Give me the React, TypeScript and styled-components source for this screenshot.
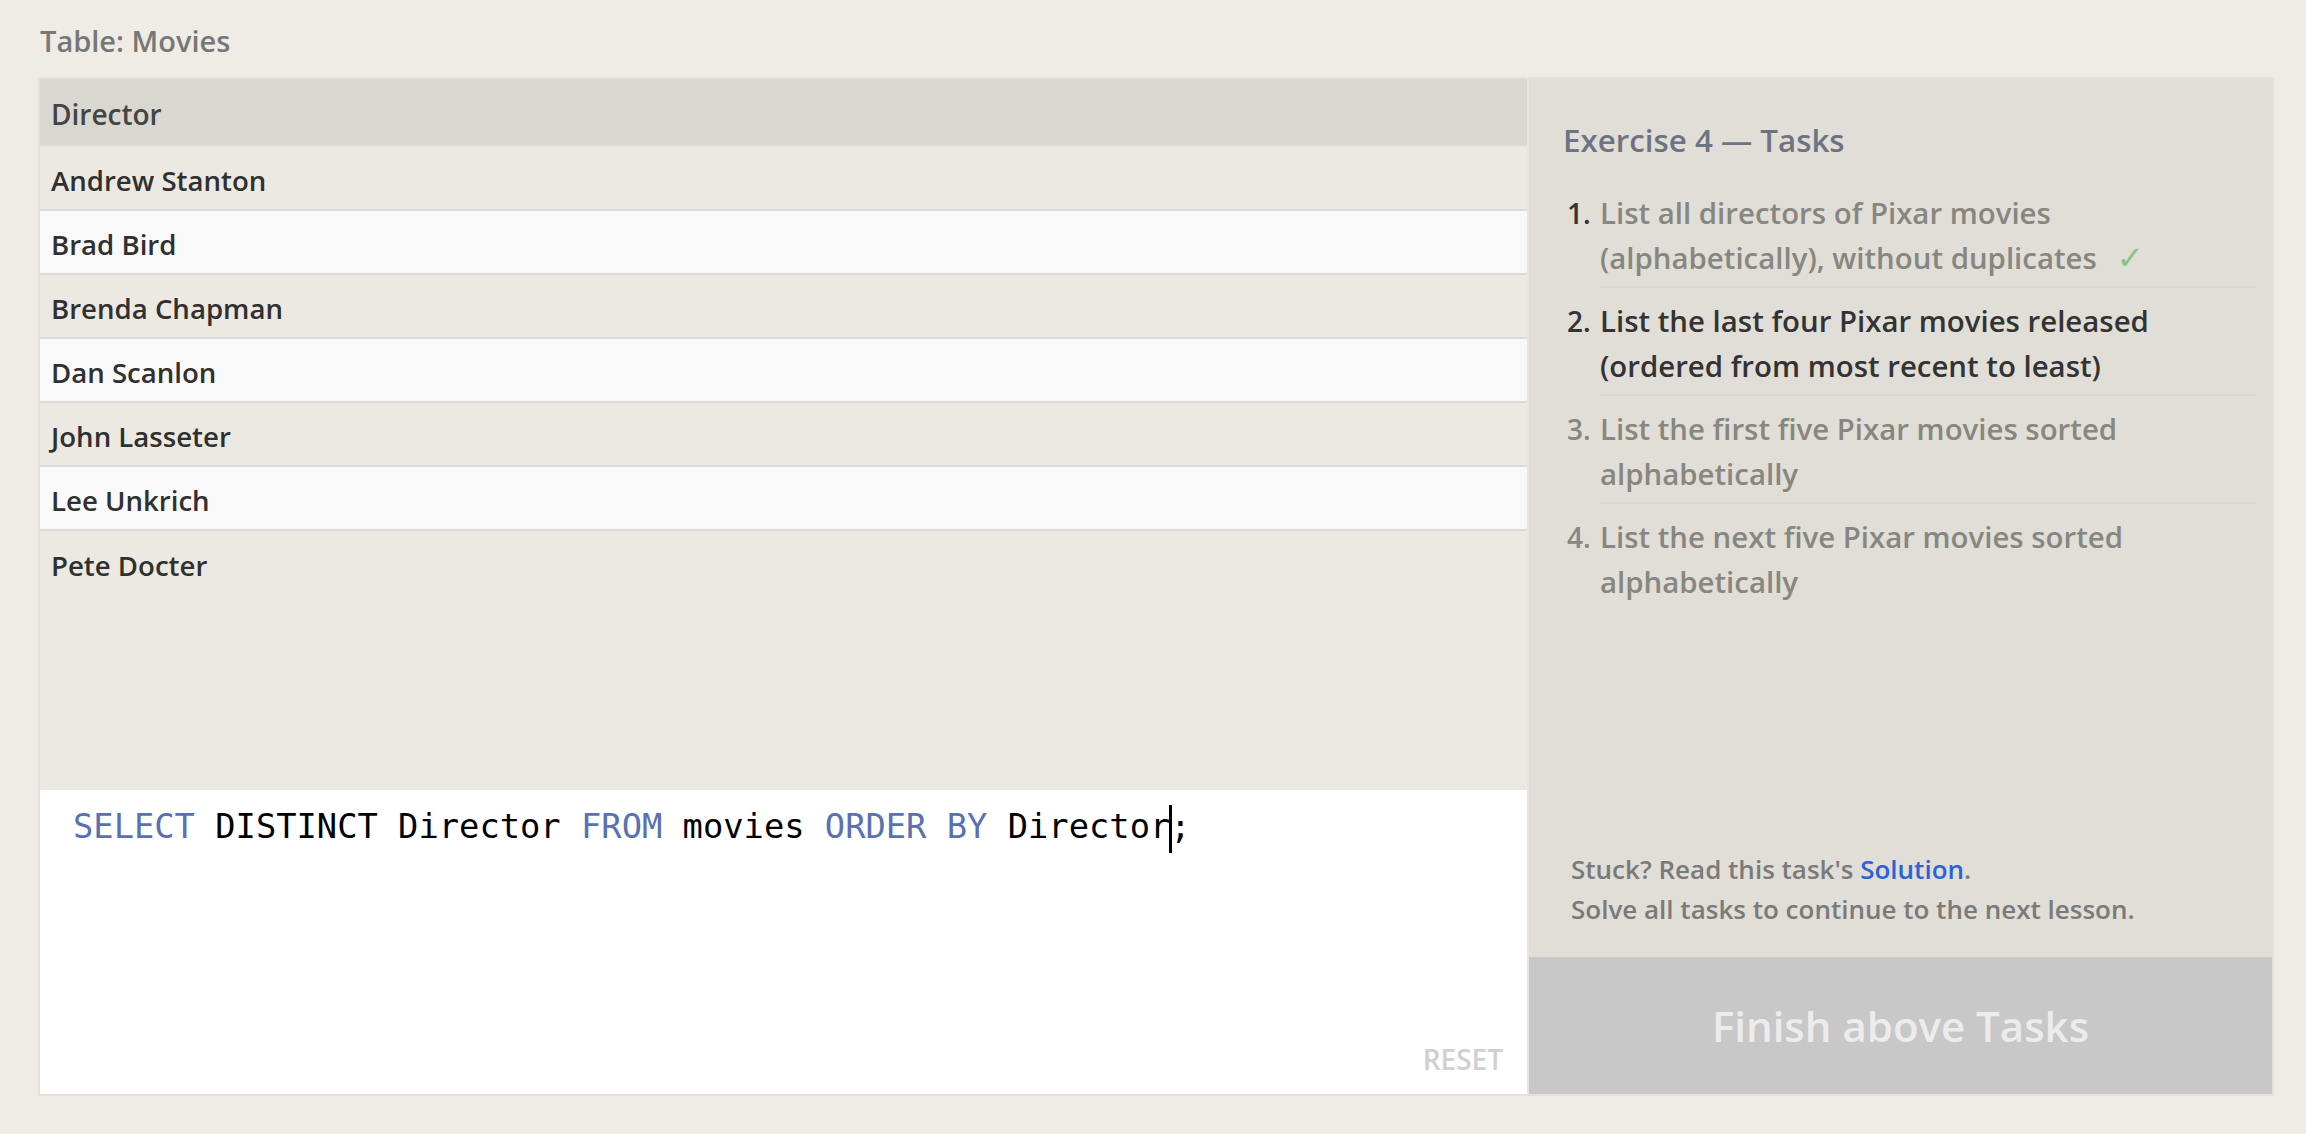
import React from 'react';
import styled, {createGlobalStyle} from 'styled-components';

const GlobalStyle = createGlobalStyle`
  html, body {
    margin: 0;
    padding: 0;
    background: #efece6;
  }
  body {
    font-family: "Open Sans", "Noto Sans", sans-serif;
  }
`;

type Task = {
  text: React.ReactNode,
  state: 'done' | 'current' | 'todo',
};

const directors = [
  'Andrew Stanton',
  'Brad Bird',
  'Brenda Chapman',
  'Dan Scanlon',
  'John Lasseter',
  'Lee Unkrich',
  'Pete Docter',
];

const tasks: Task[] = [
  {text: 'List all directors of Pixar movies (alphabetically), without duplicates', state: 'done'},
  {text: 'List the last four Pixar movies released (ordered from most recent to least)', state: 'current'},
  {text: 'List the first five Pixar movies sorted alphabetically', state: 'todo'},
  {text: 'List the next five Pixar movies sorted alphabetically', state: 'todo'},
];

const App = () => {
  return (
    <>
      <GlobalStyle/>
      <Page>
        <Title>Table: Movies</Title>
        <Panel>
          <LeftColumn>
            <ResultTable>
              <HeaderCell>Director</HeaderCell>
              {directors.map((name, i) => (
                <Row key={name} even={i % 2 === 1}>{name}</Row>
              ))}
            </ResultTable>
            <Editor>
              <Code>
                <Keyword>SELECT</Keyword> DISTINCT Director <Keyword>FROM</Keyword> movies <Keyword>ORDER BY</Keyword> Director<Cursor/>;
              </Code>
              <EditorFooter>
                <ResetButton>RESET</ResetButton>
              </EditorFooter>
            </Editor>
          </LeftColumn>
          <RightColumn>
            <TasksBox>
              <TasksHeading>Exercise 4 — Tasks</TasksHeading>
              <TaskList>
                {tasks.map((task, i) => (
                  <TaskItem key={i}>
                    <TaskNumber state={task.state}>{i + 1}.</TaskNumber>
                    <TaskText state={task.state}>
                      {task.text}
                      {task.state === 'done' && <Check>✓</Check>}
                    </TaskText>
                  </TaskItem>
                ))}
              </TaskList>
              <Hint>
                <div>Stuck? Read this task's <SolutionLink>Solution</SolutionLink>.</div>
                <div>Solve all tasks to continue to the next lesson.</div>
              </Hint>
            </TasksBox>
            <FinishButton>Finish above Tasks</FinishButton>
          </RightColumn>
        </Panel>
      </Page>
    </>
  );
}

const Page = styled.div`
  padding: 21px 32px 36px 38px;
`

const Title = styled.div`
  font-size: 29px;
  font-weight: 600;
  color: #777;
  margin-left: 2px;
  margin-bottom: 17px;
`

const Panel = styled.div`
  display: flex;
  border: 2px solid #e3e2da;
  height: 1015px;
`

const LeftColumn = styled.div`
  display: flex;
  flex-direction: column;
  width: 1487px;
  border-right: 2px solid #e7e6df;
`

const ResultTable = styled.div`
  flex: 1;
  background: #ebe9e2;
`

const HeaderCell = styled.div`
  height: 68px;
  display: flex;
  align-items: center;
  padding: 4px 0 0 11px;
  box-sizing: border-box;
  background: #d9d8d0;
  border-bottom: 2px solid #e3e2dc;
  font-size: 28px;
  font-weight: 600;
  color: #444;
`

const Row = styled.div<{even?: boolean}>`
  height: 64px;
  display: flex;
  align-items: center;
  padding: 3px 0 0 11px;
  box-sizing: border-box;
  background: ${p => p.even ? '#f9f9f9' : '#ebe9e2'};
  border-bottom: 2px solid #dcdcdc;
  font-size: 27.6px;
  font-weight: 600;
  color: #303030;
  &:last-child {
    border-bottom: none;
  }
`

const Editor = styled.div`
  height: 304px;
  display: flex;
  flex-direction: column;
  background: #fff;
  padding: 17px 24px 16px 33px;
  box-sizing: border-box;
`

const Code = styled.div`
  flex: 1;
  font-family: "DejaVu Sans Mono", "Liberation Mono", monospace;
  font-size: 33.75px;
  line-height: 40px;
  color: #000;
  white-space: pre;
`

const Keyword = styled.span`
  color: #5a70b2;
`

const Cursor = styled.span`
  position: relative;
  &::after {
    content: '';
    position: absolute;
    left: -1px;
    top: -2px;
    width: 3px;
    height: 48px;
    background: #000;
  }
`

const EditorFooter = styled.div`
  display: flex;
  justify-content: flex-end;
`

const ResetButton = styled.div`
  font-size: 28px;
  font-weight: 600;
  color: #d0d0d0;
`

const RightColumn = styled.div`
  flex: 1;
  display: flex;
  flex-direction: column;
  background: #e0ded6;
`

const TasksBox = styled.div`
  flex: 1;
  display: flex;
  flex-direction: column;
  padding: 40px 16px 28px 34px;
`

const TasksHeading = styled.div`
  font-size: 31.3px;
  font-weight: 600;
  color: #6d7383;
`

const TaskList = styled.ol`
  list-style: none;
  margin: 30px 0 0;
  padding: 0;
`

const TaskItem = styled.li`
  display: flex;
  margin-bottom: 11px;
  font-size: 29.4px;
  line-height: 45px;
  font-weight: 600;
  &:last-child > div {
    border-bottom: none;
  }
`

const TaskNumber = styled.span<{state: Task['state']}>`
  width: 33px;
  flex-shrink: 0;
  margin-left: 4px;
  font-size: 28px;
  color: ${p => p.state === 'todo' ? '#878680' : '#333'};
`

const TaskText = styled.div<{state: Task['state']}>`
  flex: 1;
  padding: 0 60px 5px 0;
  border-bottom: 2px solid #d9d7ce;
  color: ${p => p.state === 'current' ? '#333' : '#878680'};
`

const Check = styled.span`
  margin-left: 20px;
  font-size: 32px;
  color: #82c784;
  font-family: "DejaVu Sans", sans-serif;
`

const Hint = styled.div`
  margin-top: auto;
  margin-left: 8px;
  font-size: 26px;
  line-height: 40px;
  font-weight: 600;
  color: #7a7a7a;
`

const SolutionLink = styled.a`
  color: #2a63d8;
  text-decoration: none;
`

const FinishButton = styled.div`
  height: 137px;
  display: flex;
  align-items: center;
  justify-content: center;
  background: #c8c8c8;
  color: #ececec;
  font-size: 42px;
  font-weight: 600;
`

export default App;
